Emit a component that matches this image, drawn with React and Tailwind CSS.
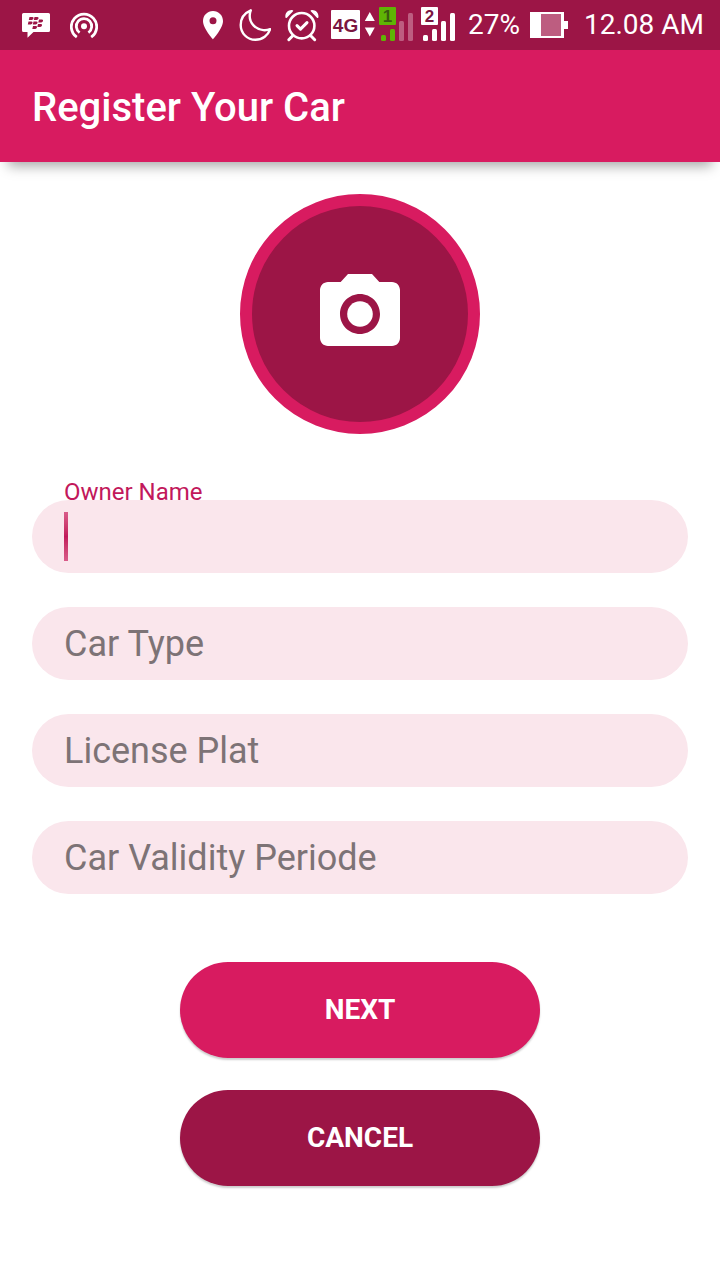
import React, { useState } from "react";

function MessengerIcon() {
  const dots = [
    [29.5, 17], [34.5, 17],
    [28.5, 21.5], [33.5, 21.5], [39, 19.5],
    [38, 24], [33, 26],
  ];
  return (
    <svg className="h-[50px] w-7 shrink-0" viewBox="22 0 28 50" aria-hidden="true">
      <path fill="#fff" d="M23.5 13h25q1.5 0 1.5 1.5v16q0 1.5-1.5 1.5H33.5l-6 5.7V32h-4q-1.500 0-1.500-1.500v-16q0-1.500 1.500-1.500z" />
      {dots.map(([x, y]) => (
        <path key={`${x}-${y}`} fill="#9c1546" d={`M${x} ${y}h3q1.500.2 1 1.600q-.4 1.400-1.800 1.400h-2.900z`} />
      ))}
    </svg>
  );
}

function HotspotIcon() {
  return (
    <svg className="h-[50px] w-7 shrink-0" viewBox="70 0 28 50" aria-hidden="true">
      <circle cx="84" cy="26.300" r="3" fill="#fff" />
      <g fill="none" stroke="#fff" strokeWidth="2.800">
        <path d="M79.600 32.600a7.700 7.700 0 1 1 8.800 0" />
        <path d="M76.800 37.200a12.700 12.700 0 1 1 14.400 0" />
      </g>
    </svg>
  );
}

function PinIcon() {
  return (
    <svg className="h-[50px] w-5 shrink-0" viewBox="204 0 20 50" aria-hidden="true">
      <path fill="#fff" fillRule="evenodd" d="M214 11c-5.600 0-10 4.400-10 9.900 0 7.300 10 18.300 10 18.300s10-11 10-18.300c0-5.500-4.400-9.900-10-9.900zm0 13.300a3.500 3.500 0 1 1 0-7 3.500 3.500 0 0 1 0 7z" />
    </svg>
  );
}

function MoonIcon() {
  return (
    <svg className="h-[50px] w-8 shrink-0" viewBox="241 0 32 50" aria-hidden="true">
      <path fill="none" stroke="#fff" strokeWidth="2.400" strokeLinejoin="round" d="M252.800 10.300C246.500 13 242.700 18.700 242.700 25c0 8.200 6.500 14.800 14.700 14.800 7 0 13-4.600 14.700-10.600-2.500.9-4.600 1.200-6.800.9-8-.9-13.600-7.100-13.600-14.100 0-2 .3-3.900 1.100-5.700z" />
    </svg>
  );
}

function AlarmIcon() {
  return (
    <svg className="h-[50px] w-[34px] shrink-0" viewBox="287 0 34 50" aria-hidden="true">
      <g fill="none" stroke="#fff" strokeLinecap="round" strokeLinejoin="round">
        <circle cx="303.700" cy="25.700" r="12.700" strokeWidth="2.600" />
        <path strokeWidth="3" d="M299 25.600l3.500 3.500 6.500-6.500" />
        <path strokeWidth="3" d="M294.500 36l-3.700 3.700M313 36l3.700 3.700" />
      </g>
      <path fill="#fff" d="M287.500 17.500c-1-3.900 2.600-8 7.100-7.300q1.300.3.200 1.300l-5.700 5.900q-1.200 1.200-1.600.1zM320.300 17.500c1-3.900-2.600-8-7.100-7.300q-1.300.3-.2 1.300l5.700 5.900q1.200 1.200 1.600.1z" />
    </svg>
  );
}

function DataIcon() {
  return (
    <svg className="h-[50px] w-11 shrink-0" viewBox="333 0 44 50" role="img" aria-label="4G data">
      <rect x="333" y="10" width="29" height="29" rx="1" fill="#fff" />
      <text x="347.500" y="32" textAnchor="middle" className="font-['Liberation_Sans'] text-[19px] font-bold" fill="#7a1540">4G</text>
      <path fill="#fff" d="M371.800 12l5 9h-10zM371.800 36.500l5-9h-10z" />
    </svg>
  );
}

function SimIcon({ number, fill, ink, dim }) {
  return (
    <svg className="h-[50px] w-[35px] shrink-0" viewBox="381 0 35 50" role="img" aria-label={`SIM ${number} signal`}>
      <rect x="381" y="7" width="17" height="18" rx="1" fill={fill} />
      <text x="389.500" y="22" textAnchor="middle" className="font-['Liberation_Sans'] text-[17px] font-bold" fill={ink}>{number}</text>
      <rect x="383" y="35" width="5" height="6" rx="1.500" fill={fill} />
      <rect x="392" y="29" width="5" height="12" rx="1.500" fill={fill} />
      <rect x="401" y="21" width="5" height="20" rx="1.500" fill={dim} />
      <rect x="410" y="13" width="5" height="28" rx="1.500" fill={dim} />
    </svg>
  );
}

function BatteryIcon() {
  return (
    <svg className="h-[50px] w-[38px] shrink-0" viewBox="530 0 38 50" aria-hidden="true">
      <path fill="#fff" d="M530 12h34v9h4v8h-4v9h-34z" />
      <path fill="#bd5d80" d="M541 14h20v22h-20z" />
    </svg>
  );
}

function StatusBar() {
  return (
    <div className="flex h-[50px] items-center justify-between bg-[#9c1546] pr-4 pl-[22px] text-[28px] leading-8 text-white">
      <div className="flex gap-5">
        <MessengerIcon />
        <HotspotIcon />
      </div>
      <div className="flex items-center">
        <div className="mr-3 flex">
          <div className="mr-4 flex"><PinIcon /></div>
          <div className="flex gap-3.5">
            <MoonIcon />
            <AlarmIcon />
          </div>
          <div className="ml-3 flex gap-1">
            <DataIcon />
            <div className="flex gap-[7px]">
              <SimIcon number="1" fill="#5fb404" ink="#3b5a10" dim="#bd5d80" />
              <SimIcon number="2" fill="#ffffff" ink="#7a1540" dim="#ffffff" />
            </div>
          </div>
        </div>
        <span>27%</span>
        <div className="mr-4 ml-2.5 flex"><BatteryIcon /></div>
        <time>12.08 AM</time>
      </div>
    </div>
  );
}

function Field({ id, hint }) {
  return (
    <input
      id={id}
      type="text"
      aria-label={hint}
      placeholder={hint}
      className="block h-[73px] w-full rounded-full bg-[#fae6ec] px-8 text-4xl text-[#212121] outline-none placeholder:text-[#7d7376]"
    />
  );
}

function OwnerField() {
  const [value, setValue] = useState("");
  return (
    <div className="relative">
      <label htmlFor="owner" className="absolute -top-[22px] left-8 text-2xl leading-7 text-[#c2185b]">
        Owner Name
      </label>
      <input
        id="owner"
        type="text"
        value={value}
        onChange={(e) => setValue(e.target.value)}
        className="block h-[73px] w-full rounded-full bg-[#fae6ec] px-8 text-4xl text-[#212121] caret-[#c2185b] outline-none"
      />
      {value === "" && (
        <span className="pointer-events-none absolute top-3 left-8 h-[49px] w-1 bg-linear-to-b from-[#d95c8a] via-[#c2185b] to-[#d95c8a]" />
      )}
    </div>
  );
}

export default function App() {
  return (
    <div className="min-h-screen bg-white font-[Roboto,sans-serif]">
      <StatusBar />
      <header className="flex h-28 items-center bg-[#d81b60] px-8 pt-1 shadow-[0_12px_12px_-8px_rgba(0,0,0,0.35)]">
        <h1 className="text-[40px] leading-12 font-medium text-white">Register Your Car</h1>
      </header>
      <main className="flex flex-col items-center px-8 py-8">
        <button
          type="button"
          aria-label="Add photo"
          className="flex size-60 items-center justify-center rounded-full border-12 border-[#d81b60] bg-[#9c1546]"
        >
          <svg className="size-24" viewBox="0 0 24 24" fill="#fff" aria-hidden="true">
            <circle cx="12" cy="12" r="3.200" />
            <path d="M9 2L7.170 4H4c-1.100 0-2 .9-2 2v12c0 1.100.9 2 2 2h16c1.100 0 2-.9 2-2V6c0-1.100-.9-2-2-2h-3.170L15 2H9zm3 15c-2.760 0-5-2.240-5-5s2.240-5 5-5 5 2.240 5 5-2.240 5-5 5z" />
          </svg>
        </button>
        <form className="mt-[66px] flex w-full flex-col items-center" onSubmit={(e) => e.preventDefault()}>
          <div className="flex w-full flex-col gap-[34px]">
            <OwnerField />
            <Field id="type" hint="Car Type" />
            <Field id="plate" hint="License Plat" />
            <Field id="validity" hint="Car Validity Periode" />
          </div>
          <div className="mt-17 flex w-full flex-col items-center gap-8 text-[28px] font-bold text-white">
            <button type="submit" className="h-24 w-[55%] rounded-full bg-[#d81b60] shadow-[0_2px_2px_rgba(0,0,0,0.2)]">NEXT</button>
            <button type="button" className="h-24 w-[55%] rounded-full bg-[#9c1546] shadow-[0_2px_2px_rgba(0,0,0,0.2)]">CANCEL</button>
          </div>
        </form>
      </main>
    </div>
  );
}
